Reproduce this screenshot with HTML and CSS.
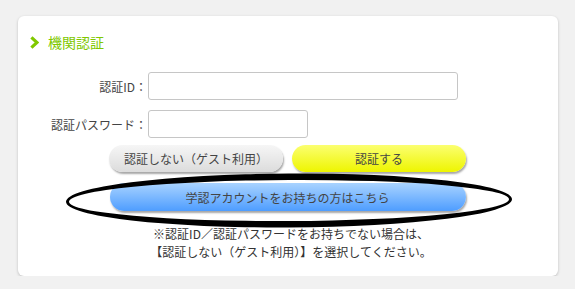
FILE: index.html
```html
<!DOCTYPE html>
<html lang="ja">
<head>
<meta charset="utf-8">
<link rel="stylesheet" href="styles.css">
</head>
<body>
<div class="card">
  <h2 class="title">
    <svg class="chev" width="9" height="13" viewBox="0 0 9 13"><path d="M1.4 1.4 L7 6.5 L1.4 11.6" fill="none" stroke="#80c800" stroke-width="3.2"/></svg>
    <span>機関認証</span>
  </h2>
  <div class="form">
    <div class="row">
      <label class="lbl">認証ID：</label>
      <input class="inp inp-long" type="text">
    </div>
    <div class="row">
      <label class="lbl">認証パスワード：</label>
      <input class="inp inp-short" type="password">
    </div>
  </div>
  <div class="btns">
    <div class="btn-row">
      <button class="btn btn-gray">認証しない（ゲスト利用）</button>
      <button class="btn btn-yellow">認証する</button>
    </div>
    <button class="btn btn-blue">学認アカウントをお持ちの方はこちら</button>
  </div>
  <p class="note">※認証ID／認証パスワードをお持ちでない場合は、<br>【認証しない（ゲスト利用）】を選択してください。</p>
  <svg class="ring" width="540" height="260" viewBox="0 0 540 260">
    <path fill="#000" fill-rule="evenodd" transform="rotate(-0.3 271 184.5)"
      d="M48 184.5 A223 27 0 1 0 494 184.5 A223 27 0 1 0 48 184.5 Z
         M51 184.5 A220 20.5 0 1 0 491 184.5 A220 20.5 0 1 0 51 184.5 Z"/>
  </svg>
</div>
</body>
</html>
```
FILE: styles.css
```css
html, body {
  margin: 0;
  padding: 0;
  background: #f1f1f1;
}
body {
  padding: 16px 0 0 18px;
  font-family: "Noto Sans CJK JP", "Noto Sans", sans-serif;
  color: #333;
}
.card {
  position: relative;
  width: 540px;
  height: 260px;
  background: #fff;
  border-radius: 6px;
  box-shadow: 0 1px 3px rgba(0,0,0,0.22);
  box-sizing: border-box;
  padding-top: 16px;
}
.title {
  margin: 0;
  padding-left: 12px;
  height: 20px;
  display: flex;
  align-items: center;
  gap: 9px;
  font-size: 14px;
  font-weight: normal;
  color: #80c800;
  line-height: 20px;
}
.chev { display: block; }
.form {
  margin-top: 20px;
  display: flex;
  flex-direction: column;
  gap: 10px;
}
.row {
  display: flex;
  align-items: center;
  height: 28px;
}
.lbl {
  width: 129px;
  text-align: right;
  font-size: 12px;
  color: #444;
  margin-right: 1px;
}
.inp {
  height: 28px;
  box-sizing: border-box;
  border: 1px solid #c6c6c6;
  border-radius: 3px;
  background: #fff;
  margin: 0;
  padding: 0 4px;
}
.inp-long { width: 310px; }
.inp-short { width: 160px; }
.btns {
  margin-top: 7px;
  display: flex;
  flex-direction: column;
  align-items: center;
  gap: 11px;
  padding-right: 1px;
}
.btn-row {
  display: flex;
  gap: 9px;
}
.btn {
  font-family: "Noto Sans CJK JP", "Noto Sans", sans-serif;
  font-size: 12px;
  color: #444;
  border: none;
  border-radius: 14px;
  height: 27px;
  padding: 0;
  box-shadow: 1px 2px 2px rgba(0,0,0,0.35);
}
.btn-gray {
  width: 174px;
  background: linear-gradient(#f6f6f6, #dcdcdc);
}
.btn-yellow {
  width: 174px;
  background: linear-gradient(#fbff70, #eef500);
}
.btn-blue {
  width: 356px;
  height: 28px;
  background: linear-gradient(#a9d3ff, #4e9dff);
}
.note {
  margin: 14px 0 0;
  padding-left: 6px;
  text-align: center;
  font-size: 12px;
  line-height: 18px;
  color: #333;
}
.ring {
  position: absolute;
  left: 0;
  top: 0;
  pointer-events: none;
}
```
